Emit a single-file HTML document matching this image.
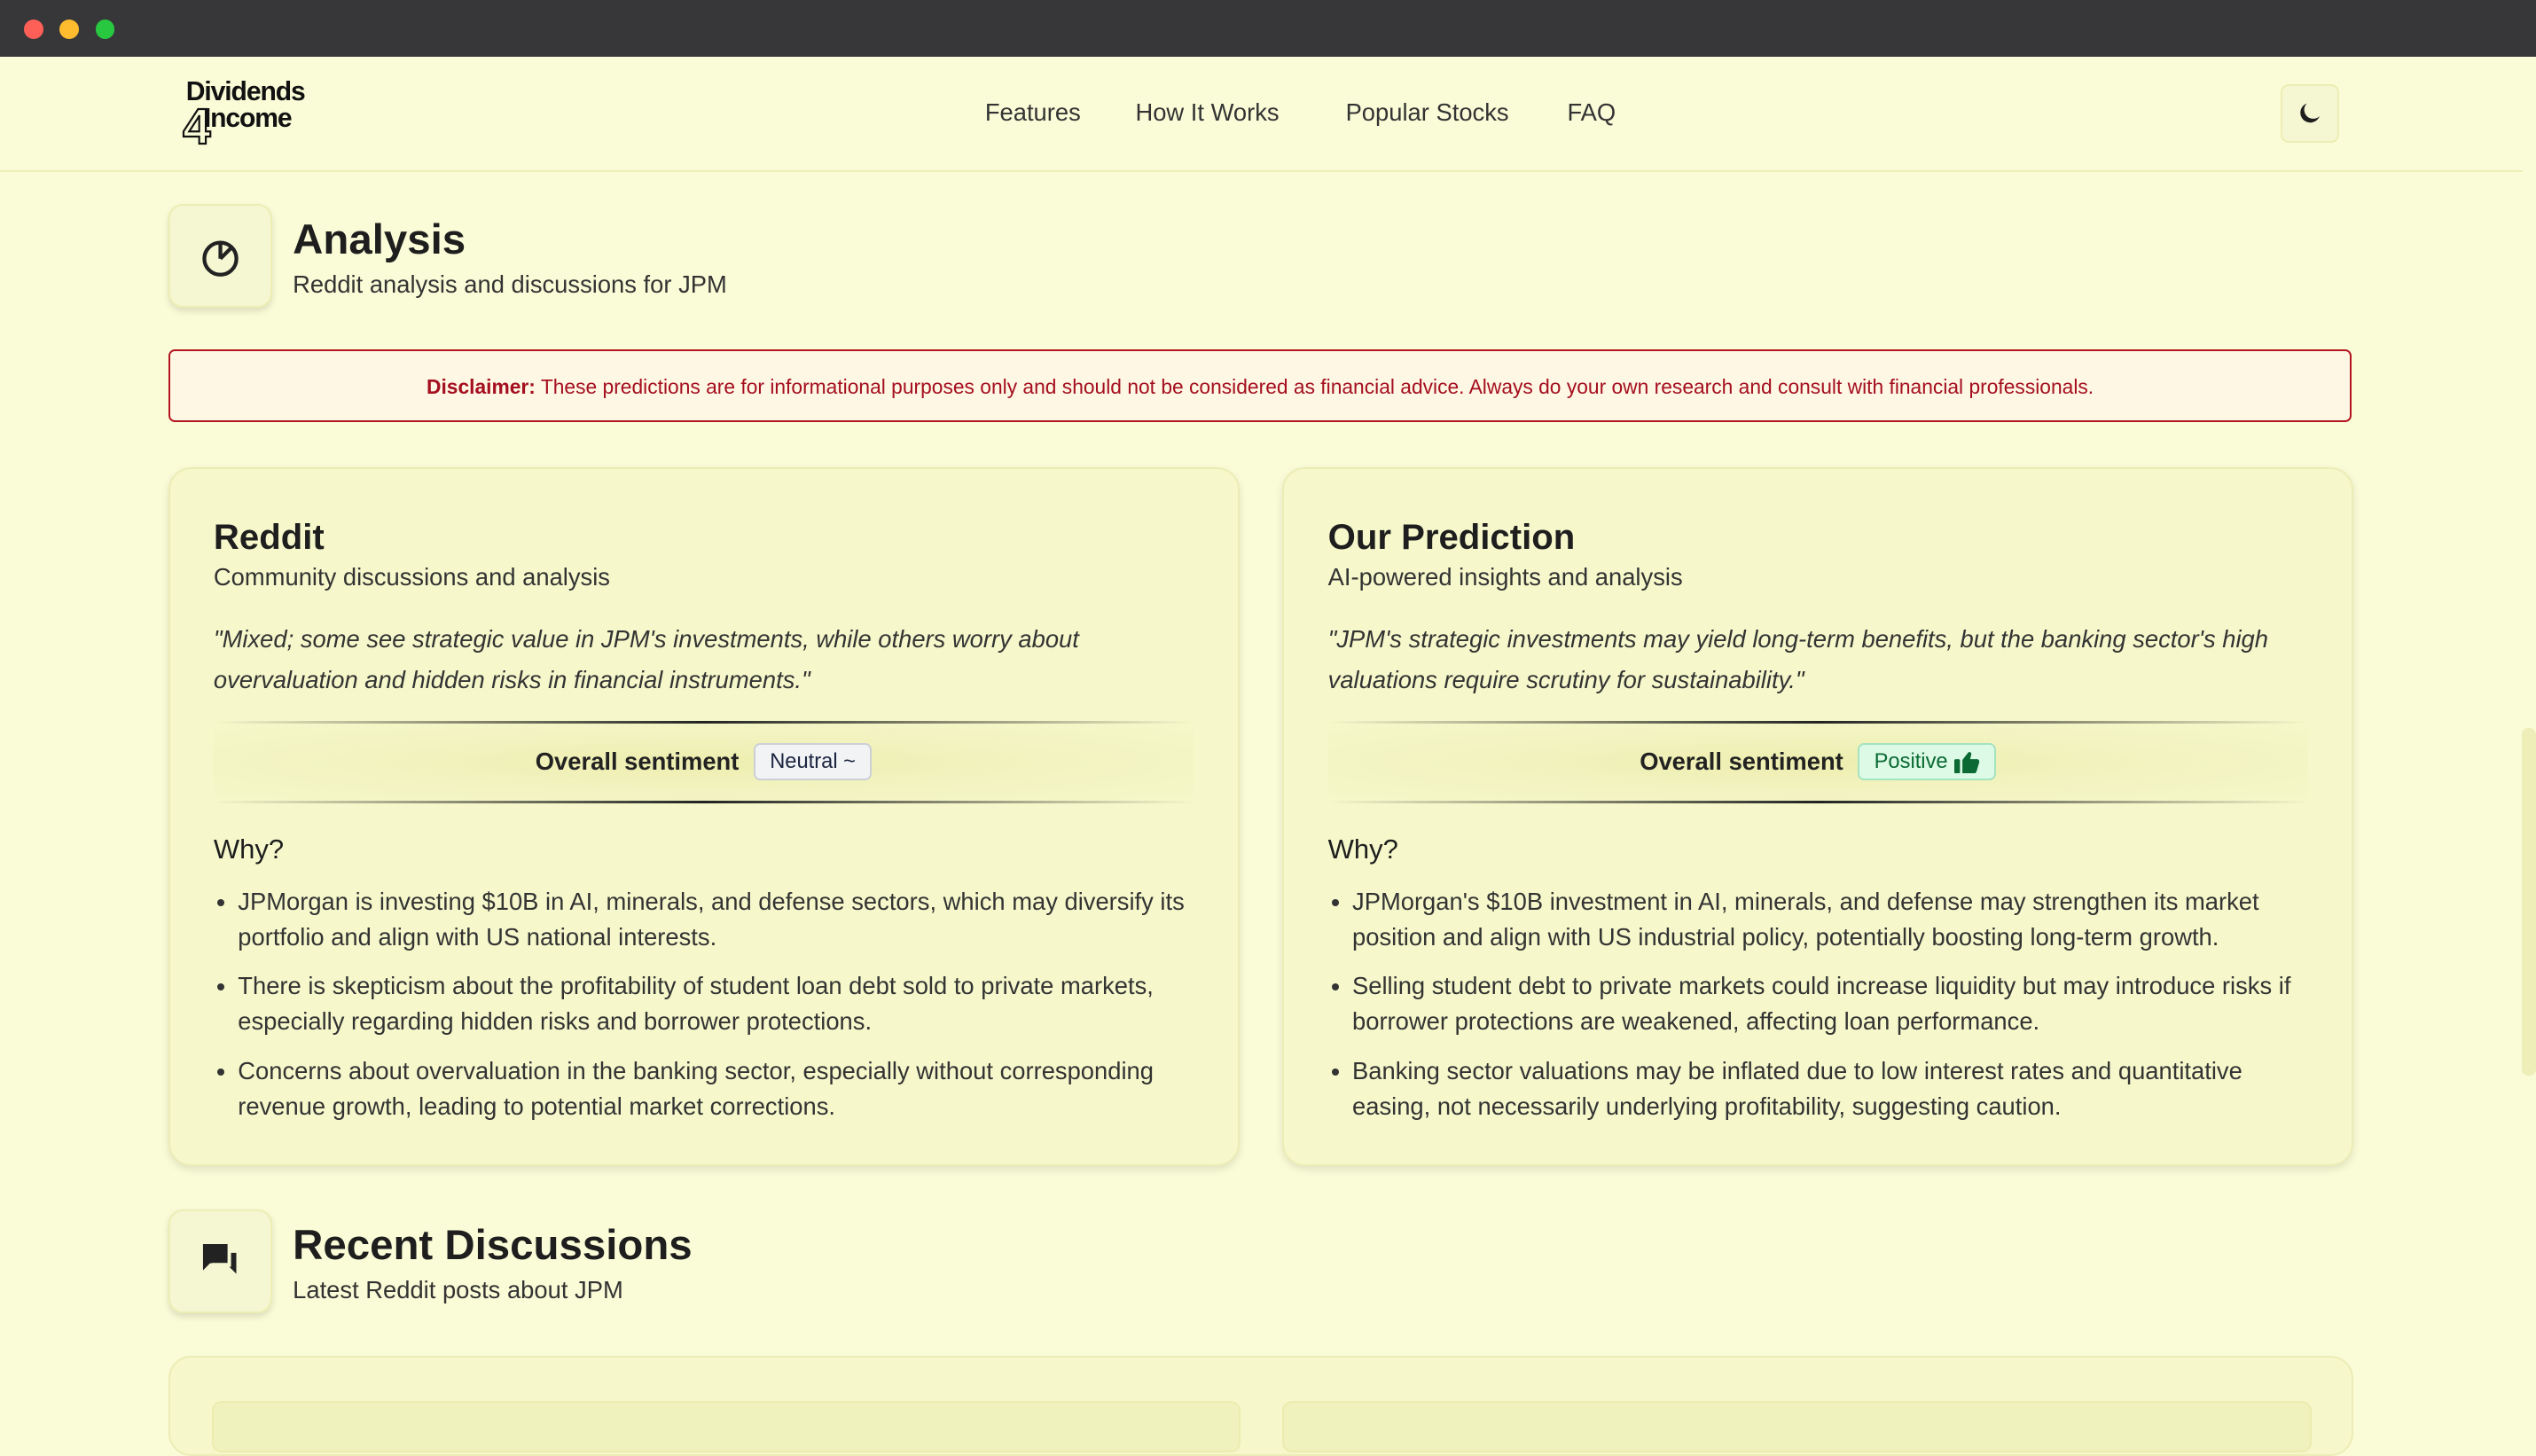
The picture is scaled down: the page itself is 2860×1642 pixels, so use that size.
<!DOCTYPE html>
<html><head><meta charset="utf-8"><style>
html,body{margin:0;padding:0;}
body{width:1568px;height:879.5px;zoom:1.8240;overflow:hidden;background:#fafcd7;font-family:"Liberation Sans",sans-serif;color:#222;position:relative}
.abs{position:absolute}
.tb{left:0;top:0;width:1568px;height:35px;background:#37373a}
.dot{width:12px;height:12px;border-radius:50%;top:12px}
.nav{top:35px;left:0;width:1560px;height:70px;border-bottom:1.5px solid #eeeeb8}
.nl{top:61px;font-size:15px;color:#333}
.ibox{width:62px;height:62px;border:1.5px solid #eceeb4;border-radius:9px;background:#f5f7d2;box-shadow:0 2px 4px rgba(0,0,0,.12);display:flex;align-items:center;justify-content:center}
h1{margin:0;font-size:26px;font-weight:bold;color:#1e1e1e}
.sub{font-size:15px;color:#333}
.disc{left:104px;top:216px;width:1348px;height:43px;border:1.5px solid #b3141f;border-radius:4px;background:#fdf7e4;font-size:12.5px;color:#a50f1f;text-align:center;line-height:44px}
.card{top:289px;width:660px;height:430px;border:1.5px solid #ececb6;border-radius:14px;background:#f6f8cb;box-shadow:0 2px 5px rgba(0,0,0,.1)}
.card .in{position:absolute;left:27px;right:27px;top:28px}
.ct{font-size:22px;font-weight:bold;color:#1e1e1e;line-height:28px}
.cs{font-size:15px;color:#333;margin-top:2px}
.q{font-style:italic;font-size:15px;line-height:25px;color:#333;margin-top:17px}
.band{margin-top:13px;height:51px;position:relative;background:radial-gradient(ellipse at center,#eeeeb0 0%,#f2f3c0 50%,#f6f8cb 100%);display:flex;align-items:center;justify-content:center;font-weight:bold;font-size:15px}
.band:before,.band:after{content:"";position:absolute;left:0;right:0;height:1.5px;background:linear-gradient(90deg,rgba(30,30,30,0),#222 50%,rgba(30,30,30,0))}
.band:before{top:0}.band:after{bottom:0}
.pill{margin-left:9px;font-weight:normal;font-size:13px;border-radius:4px;padding:3px 9px;display:inline-flex;align-items:center;gap:4px}
.why{font-size:17px;margin-top:19px;color:#1e1e1e}
ul{margin:11px 0 0;padding:0 0 0 15px;font-size:15px;line-height:22px;color:#333}
li{margin-bottom:8.5px}
</style></head><body>
<div class="abs tb"></div>
<div class="abs dot" style="left:15px;background:#fe5f57"></div>
<div class="abs dot" style="left:37px;background:#febc2e"></div>
<div class="abs dot" style="left:59px;background:#28c840"></div>
<div class="abs nav"></div>
<div class="abs" style="left:115px;top:49px;font-weight:bold;font-size:16.5px;line-height:16px;color:#111;letter-spacing:-0.6px">Dividends<br><span style="position:relative;left:11px">Income</span></div>
<div class="abs" style="left:113px;top:63px;font-weight:bold;font-size:31px;line-height:31px;color:#fafcd7;-webkit-text-stroke:1.2px #111">4</div>
<div class="abs nl" style="left:609px">Features</div>
<div class="abs nl" style="left:702px">How It Works</div>
<div class="abs nl" style="left:832px">Popular Stocks</div>
<div class="abs nl" style="left:969px">FAQ</div>
<div class="abs" style="left:1410px;top:52px;width:34px;height:34px;border:1.5px solid #eceeb4;border-radius:5px;background:#f5f7d2;display:flex;align-items:center;justify-content:center">
<svg width="14" height="14" viewBox="0 0 16 16"><path d="M6 1a7 7 0 1 0 9 9A6 6 0 0 1 6 1z" fill="#1e1e1e"/></svg></div>
<div class="abs" style="left:1559px;top:450px;width:9px;height:215px;background:#eeeeb8;border-radius:4px"></div>

<div class="abs ibox" style="left:104px;top:126px"><svg width="28" height="28" viewBox="0 0 24 24" fill="none" stroke="#222" stroke-width="2"><circle cx="12" cy="13.5" r="8.5"/><path d="M12 13.5V5" stroke-width="2"/><path d="M12 13.5L18 7.5"/></svg></div>
<div class="abs" style="left:181px;top:133px"><h1>Analysis</h1><div class="sub" style="margin-top:4px">Reddit analysis and discussions for JPM</div></div>

<div class="abs disc"><b>Disclaimer:</b> These predictions are for informational purposes only and should not be considered as financial advice. Always do your own research and consult with financial professionals.</div>

<div class="abs card" style="left:104px"><div class="in">
<div class="ct">Reddit</div><div class="cs">Community discussions and analysis</div>
<div class="q">"Mixed; some see strategic value in JPM's investments, while others worry about overvaluation and hidden risks in financial instruments."</div>
<div class="band">Overall sentiment <span class="pill" style="background:#f2f3f5;border:1.5px solid #ccd0d6;color:#1b2540">Neutral ~</span></div>
<div class="why">Why?</div>
<ul><li>JPMorgan is investing $10B in AI, minerals, and defense sectors, which may diversify its portfolio and align with US national interests.</li>
<li>There is skepticism about the profitability of student loan debt sold to private markets, especially regarding hidden risks and borrower protections.</li>
<li>Concerns about overvaluation in the banking sector, especially without corresponding revenue growth, leading to potential market corrections.</li></ul>
</div></div>

<div class="abs card" style="left:793px"><div class="in">
<div class="ct">Our Prediction</div><div class="cs">AI-powered insights and analysis</div>
<div class="q">"JPM's strategic investments may yield long-term benefits, but the banking sector's high valuations require scrutiny for sustainability."</div>
<div class="band">Overall sentiment <span class="pill" style="background:#dcfae6;border:1.5px solid #a6e3bf;color:#0b6a33">Positive <svg width="16" height="14" viewBox="0 0 16 14"><rect x="0" y="5" width="3.5" height="9" rx="1" fill="#0b6a33"/><path d="M5 5.5 8.5 1c1-1 2.3 0 2 1.2L9.8 5H14c1 0 1.7 1 1.4 2l-1.6 5.5c-.3.9-1 1.5-1.9 1.5H5z" fill="#0b6a33"/></svg></span></div>
<div class="why">Why?</div>
<ul><li>JPMorgan's $10B investment in AI, minerals, and defense may strengthen its market position and align with US industrial policy, potentially boosting long-term growth.</li>
<li>Selling student debt to private markets could increase liquidity but may introduce risks if borrower protections are weakened, affecting loan performance.</li>
<li>Banking sector valuations may be inflated due to low interest rates and quantitative easing, not necessarily underlying profitability, suggesting caution.</li></ul>
</div></div>

<div class="abs ibox" style="left:104px;top:748px"><svg width="26" height="26" viewBox="0 0 24 24"><path d="M2 2h14v11H6l-4 4z" fill="#222"/><path d="M7 15h10l4 4V7h-3v8H7z" fill="#222"/><path d="M7 13.5h9.5" stroke="#f5f7d2" stroke-width="1.5"/></svg></div>
<div class="abs" style="left:181px;top:755px"><h1>Recent Discussions</h1><div class="sub" style="margin-top:4px">Latest Reddit posts about JPM</div></div>

<div class="abs" style="left:104px;top:838px;width:1349px;height:60px;border:1.5px solid #ececb6;border-radius:14px;background:#f6f8cb"></div>
<div class="abs" style="left:131px;top:866px;width:634px;height:30px;border:1.5px solid #eaecb0;border-radius:6px;background:#f0f2bd"></div>
<div class="abs" style="left:793px;top:866px;width:634px;height:30px;border:1.5px solid #eaecb0;border-radius:6px;background:#f0f2bd"></div>
</body></html>
